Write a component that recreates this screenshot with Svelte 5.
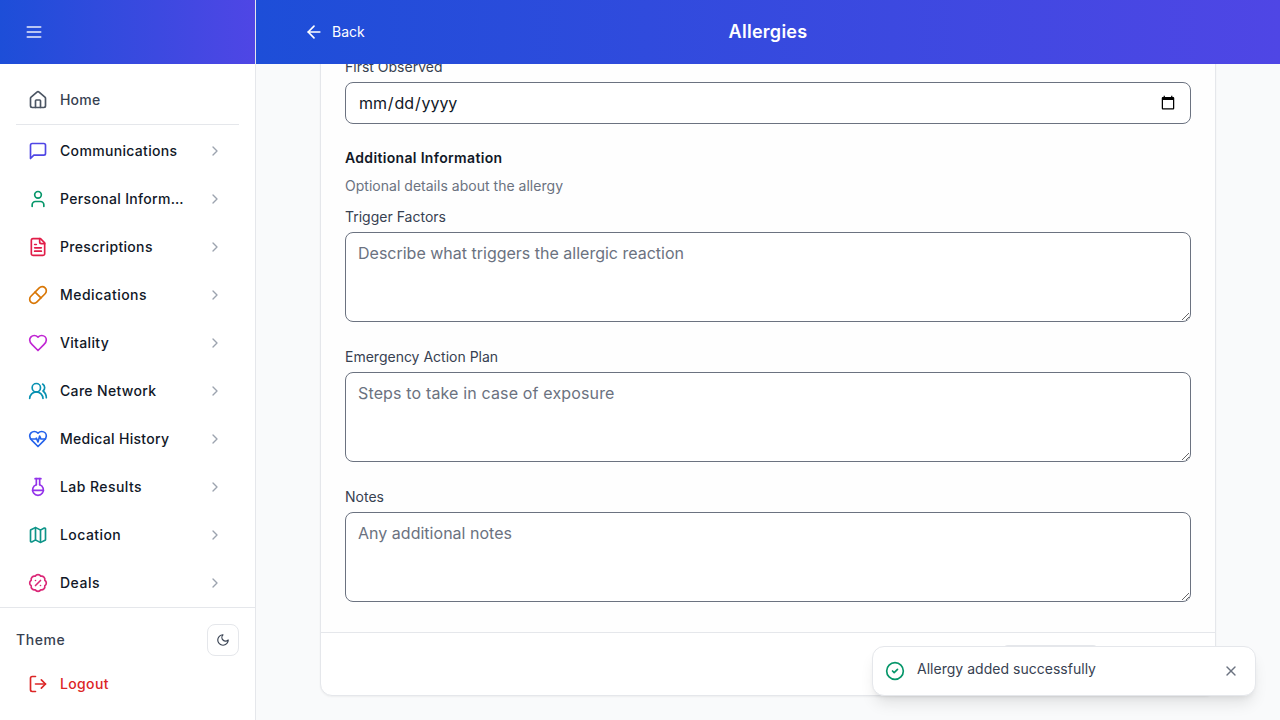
<script>
  const items = [
    { label: 'Communications', color: '#4f46e5', paths: ['M21 15a2 2 0 0 1-2 2H7l-4 4V5a2 2 0 0 1 2-2h14a2 2 0 0 1 2 2z'] },
    { label: 'Personal Information', color: '#059669', paths: ['M19 21v-2a4 4 0 0 0-4-4H9a4 4 0 0 0-4 4v2', 'M8 7a4 4 0 1 0 8 0a4 4 0 1 0-8 0'] },
    { label: 'Prescriptions', color: '#e11d48', paths: ['M15 2H6a2 2 0 0 0-2 2v16a2 2 0 0 0 2 2h12a2 2 0 0 0 2-2V7Z', 'M14 2v4a2 2 0 0 0 2 2h4', 'M10 9H8', 'M16 13H8', 'M16 17H8'] },
    { label: 'Medications', color: '#d97706', spacing: 0.44, paths: ['m10.5 20.5 10-10a4.95 4.95 0 1 0-7-7l-10 10a4.95 4.95 0 1 0 7 7Z', 'm8.5 8.5 7 7'] },
    { label: 'Vitality', color: '#c026d3', paths: ['M19 14c1.49-1.46 3-3.21 3-5.5A5.5 5.5 0 0 0 16.5 3c-1.76 0-3 .5-4.5 2-1.5-1.5-2.74-2-4.5-2A5.5 5.5 0 0 0 2 8.5c0 2.3 1.5 4.05 3 5.5l7 7Z'] },
    { label: 'Care Network', color: '#0891b2', paths: ['M18 21a8 8 0 0 0-16 0', 'M5 8a5 5 0 1 0 10 0a5 5 0 1 0-10 0', 'M22 20c0-3.37-2-6.5-4-8a5 5 0 0 0-.45-8.3'] },
    { label: 'Medical History', color: '#2563eb', spacing: 0.29, paths: ['M19 14c1.49-1.46 3-3.21 3-5.5A5.5 5.5 0 0 0 16.5 3c-1.76 0-3 .5-4.5 2-1.5-1.5-2.74-2-4.5-2A5.5 5.5 0 0 0 2 8.5c0 2.3 1.5 4.05 3 5.5l7 7Z', 'M3.22 12H9.5l.5-1 2 4.5 2-7 1.5 3.5h5.27'] },
    { label: 'Lab Results', color: '#9333ea', spacing: 0.44, paths: ['M10 2v7.31', 'M14 9.3V1.99', 'M8.5 2h7', 'M14 9.3a6.5 6.5 0 1 1-4 0', 'M5.52 16h12.96'] },
    { label: 'Location', color: '#0d9488', spacing: 0.44, paths: ['M14.106 5.553a2 2 0 0 0 1.788 0l3.659-1.83A1 1 0 0 1 21 4.619v12.764a1 1 0 0 1-.553.894l-4.553 2.277a2 2 0 0 1-1.788 0l-4.212-2.106a2 2 0 0 0-1.788 0l-3.659 1.83A1 1 0 0 1 3 19.381V6.618a1 1 0 0 1 .553-.894l4.553-2.277a2 2 0 0 1 1.788 0z', 'M15 5.764v15', 'M9 3.236v15'] },
    { label: 'Deals', color: '#db2777', spacing: 0.5, paths: ['M3.85 8.62a4 4 0 0 1 4.78-4.77 4 4 0 0 1 6.74 0 4 4 0 0 1 4.78 4.78 4 4 0 0 1 0 6.74 4 4 0 0 1-4.77 4.78 4 4 0 0 1-6.75 0 4 4 0 0 1-4.78-4.77 4 4 0 0 1 0-6.76Z', 'm15 9-6 6', 'M9 9h.01', 'M15 15h.01'] }
  ];
  const home = ['M15 21v-8a1 1 0 0 0-1-1h-4a1 1 0 0 0-1 1v8', 'M3 10a2 2 0 0 1 .709-1.528l7-5.999a2 2 0 0 1 2.582 0l7 5.999A2 2 0 0 1 21 10v9a2 2 0 0 1-2 2H5a2 2 0 0 1-2-2z'];
  const fields = [
    { id: 'trigger', label: 'Trigger Factors', hint: 'Describe what triggers the allergic reaction', spacing: 0 },
    { id: 'plan', label: 'Emergency Action Plan', hint: 'Steps to take in case of exposure', spacing: 0.15 },
    { id: 'notes', label: 'Notes', hint: 'Any additional notes', spacing: 0.02 }
  ];
</script>

{#snippet icon(paths, size)}
  <svg width={size} height={size} viewBox="0 0 24 24" fill="none" stroke="currentColor" stroke-width="2" stroke-linecap="round" stroke-linejoin="round" aria-hidden="true">
    {#each paths as d}<path {d} />{/each}
  </svg>
{/snippet}

<div class="app">
  <aside>
    <div class="brand">
      <button class="menu" aria-label="Toggle menu">{@render icon(['M4 6h16', 'M4 12h16', 'M4 18h16'], 20)}</button>
    </div>
    <nav>
      <a class="item home" href="#home">{@render icon(home, 20)}<span>Home</span></a>
      <div class="groups">
        {#each items as item}
          <button class="item">
            <i style="color: {item.color}">{@render icon(item.paths, 20)}</i>
            <span style="letter-spacing: {item.spacing ?? 0.33}px">{item.label}</span>
            <i class="chev">{@render icon(['m9 18 6-6-6-6'], 16)}</i>
          </button>
        {/each}
      </div>
    </nav>
    <div class="bottom">
      <div class="theme">
        <span>Theme</span>
        <button aria-label="Dark theme">{@render icon(['M12 3a6 6 0 0 0 9 9 9 9 0 1 1-9-9Z'], 14)}</button>
      </div>
      <button class="item logout">{@render icon(['M9 21H5a2 2 0 0 1-2-2V5a2 2 0 0 1 2-2h4', 'm16 17 5-5-5-5', 'M21 12H9'], 20)}<span>Logout</span></button>
    </div>
  </aside>

  <div class="main">
    <header>
      <button class="back">{@render icon(['m12 19-7-7 7-7', 'M19 12H5'], 20)}<span>Back</span></button>
      <h1>Allergies</h1>
      <div></div>
    </header>
    <main>
      <form class="card">
        <div class="body">
          <div class="field first">
            <label for="observed">First Observed</label>
            <input id="observed" type="date" />
          </div>
          <div class="intro">
            <h2>Additional Information</h2>
            <p>Optional details about the allergy</p>
          </div>
          {#each fields as f}
            <div class="field">
              <label for={f.id}>{f.label}</label>
              <textarea id={f.id} rows="3" placeholder={f.hint} style="letter-spacing: {f.spacing}px"></textarea>
            </div>
          {/each}
        </div>
        <div class="actions"><button type="button" aria-label="Cancel"></button></div>
      </form>
    </main>
  </div>

  <div class="toast" role="status">
    <i class="ok">{@render icon(['M2 12a10 10 0 1 0 20 0a10 10 0 1 0-20 0', 'm9 12 2 2 4-4'], 20)}</i>
    <span>Allergy added successfully</span>
    <button aria-label="Close">{@render icon(['M18 6 6 18', 'm6 6 12 12'], 16)}</button>
  </div>
</div>

<style>
  :global(body) { margin: 0; }
  .app, .app * { box-sizing: border-box; }
  .app { display: flex; height: 720px; width: 1280px; overflow: hidden; background: #f9fafb; font: 14px/20px Inter, sans-serif; color: #374151; position: relative; }
  button { font: inherit; color: inherit; background: none; border: 0; padding: 0; margin: 0; letter-spacing: inherit; }
  svg { display: block; flex: none; }
  i { display: flex; flex: none; }
  aside { width: 256px; flex: none; display: flex; flex-direction: column; background: #fff; border-right: 1px solid #e5e7eb; letter-spacing: 0.35px; font-weight: 500; }
  .brand { height: 64px; flex: none; display: flex; align-items: center; padding-left: 24px; background: linear-gradient(to right, #1d4ed8, #4f46e5); }
  .menu { color: rgba(255, 255, 255, 0.9); }
  nav { flex: 1; min-height: 0; overflow: hidden; padding: 16px 16px 0; }
  .item { display: flex; align-items: center; width: 100%; height: 40px; padding: 0 12px; gap: 12px; text-align: left; text-decoration: none; color: #111827; }
  .home { color: #374151; letter-spacing: 0.2px; }
  .home svg { color: #4b5563; }
  .groups { border-top: 1px solid #e5e7eb; margin-top: 4px; padding-top: 6px; display: flex; flex-direction: column; gap: 8px; }
  .groups .item { flex: none; padding-right: 16px; }
  .groups .item span { width: 124px; overflow: hidden; text-overflow: ellipsis; white-space: nowrap; }
  .chev { margin-left: auto; color: #9ca3af; }
  .bottom { height: 113px; flex: none; border-top: 1px solid #e5e7eb; padding: 16px; }
  .theme { display: flex; justify-content: space-between; align-items: center; margin-bottom: 8px; letter-spacing: 0.55px; }
  .theme button { width: 32px; height: 32px; border: 1px solid #e5e7eb; border-radius: 8px; display: grid; place-items: center; color: #374151; }
  .logout { color: #dc2626; }
  .main { flex: 1; display: flex; flex-direction: column; min-width: 0; }
  header { height: 64px; flex: none; padding: 0 48px; display: grid; grid-template-columns: 1fr auto 1fr; align-items: center; color: #fff; background: linear-gradient(to right, #1d4ed8, #4f46e5); }
  .back { display: flex; align-items: center; gap: 8px; }
  h1 { margin: 0; font-size: 18px; line-height: 28px; font-weight: 600; letter-spacing: 0.28px; }
  main { flex: 1; min-height: 0; overflow: hidden; padding: 0 64px 24px; display: flex; flex-direction: column; justify-content: flex-end; }
  .card { flex: none; border: 1px solid #e5e7eb; border-radius: 12px; background: #fff; box-shadow: 0 1px 2px rgba(0, 0, 0, 0.05); overflow: hidden; }
  .body { padding: 24px 24px 30px; background: #fefefe; display: flex; flex-direction: column; gap: 25px; }
  .field { display: flex; flex-direction: column; gap: 5px; }
  .first { margin-bottom: -1px; }
  input, textarea { width: 100%; font: 16px/24px Inter, sans-serif; padding: 8px 12px; border: 1px solid #6b7280; border-radius: 8px; background: #fff; color: #111827; margin: 0; display: block; outline: none; }
  input { height: 42px; letter-spacing: -0.1px; }
  textarea { height: 90px; resize: vertical; }
  textarea::placeholder { color: #6b7280; opacity: 1; }
  .intro { margin-bottom: -14px; }
  h2 { margin: 0 0 8px; font-size: 14px; line-height: 20px; font-weight: 600; color: #111827; letter-spacing: 0.33px; }
  p { margin: 0; color: #6b7280; letter-spacing: 0.02px; }
  .actions { height: 63px; border-top: 1px solid #e5e7eb; padding: 12px 116px; display: flex; justify-content: flex-end; }
  .actions button { width: 97px; height: 38px; border: 1px solid #e5e7eb; border-radius: 6px; background: #e5e7eb; }
  .toast { position: absolute; right: 24px; bottom: 24px; width: 384px; height: 50px; padding: 0 16px 0 12px; display: flex; align-items: center; background: #fff; border: 1px solid #e5e7eb; border-radius: 12px; box-shadow: 0 10px 15px -3px rgba(0, 0, 0, 0.1), 0 4px 6px -4px rgba(0, 0, 0, 0.1); }
  .ok { color: #059669; }
  .toast span { flex: 1; margin: -4px 0 0 12px; letter-spacing: 0.02px; }
  .toast button { color: #6b7280; }
</style>
